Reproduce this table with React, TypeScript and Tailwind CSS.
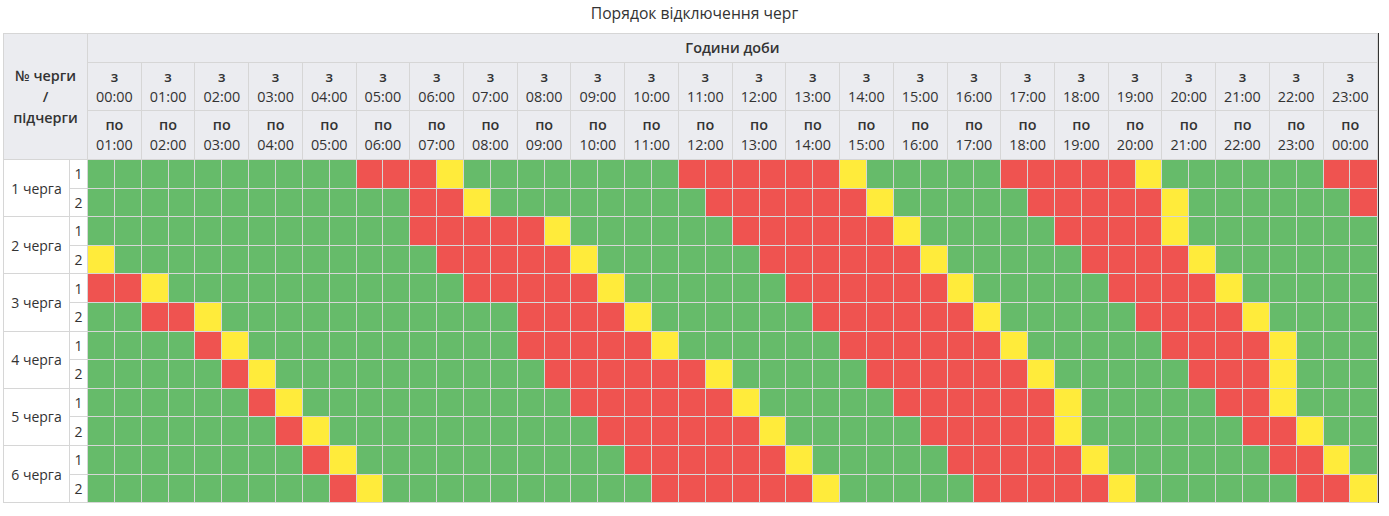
const HOURS = Array.from({ length: 24 }, (_, i) => i);

// one string per sub-queue, run-length: G = світло є, R = відключення, Y = можливе
const SCHEDULE = [
  "G10 R3 Y1 G8 R6 Y1 G5 R5 Y1 G6 R2",
  "G12 R2 Y1 G8 R6 Y1 G5 R5 Y1 G6 R1",
  "G12 R5 Y1 G6 R6 Y1 G5 R4 Y1 G7",
  "Y1 G12 R5 Y1 G6 R6 Y1 G5 R4 Y1 G6",
  "R2 Y1 G11 R5 Y1 G6 R6 Y1 G5 R4 Y1 G5",
  "G2 R2 Y1 G11 R4 Y1 G6 R6 Y1 G5 R4 Y1 G4",
  "G4 R1 Y1 G10 R5 Y1 G6 R6 Y1 G5 R4 Y1 G3",
  "G5 R1 Y1 G10 R6 Y1 G5 R6 Y1 G5 R3 Y1 G3",
  "G6 R1 Y1 G10 R6 Y1 G5 R6 Y1 G5 R2 Y1 G3",
  "G7 R1 Y1 G10 R6 Y1 G5 R5 Y1 G6 R2 Y1 G2",
  "G8 R1 Y1 G10 R6 Y1 G5 R5 Y1 G6 R2 Y1 G1",
  "G9 R1 Y1 G10 R6 Y1 G5 R5 Y1 G6 R2 Y1",
];

const CELL: Record<string, string> = {
  G: "bg-[#66bb6a]",
  R: "bg-[#ef5350]",
  Y: "bg-[#ffeb3b]",
};

function expand(row: string): string[] {
  return row.split(" ").flatMap((t) => Array(Number(t.slice(1))).fill(t[0]));
}

const pad = (n: number) => `${String(n % 24).padStart(2, "0")}:00`;

export default function App() {
  const rows = SCHEDULE.map(expand);

  return (
    <div
      className="bg-white text-[#333] text-[14px] w-[1389px] min-h-[516px]"
      style={{ fontFamily: "'Open Sans', sans-serif" }}
    >
      <div className="h-[33px] pt-[2px] text-center text-[15.7px] leading-[22px]">Порядок відключення черг</div>

      <div className="pl-[3px]">
        <div className="w-[1376px] border-r border-[#333]">
          <table className="table-fixed border-collapse w-[1375px]">
            <colgroup>
              <col className="w-[66px]" />
              <col className="w-[18px]" />
              {Array.from({ length: 48 }, (_, i) => (
                <col key={i} />
              ))}
            </colgroup>
            <thead className="bg-[#ebecf0] text-[14.4px]">
              <tr className="h-[29px]">
                <th
                  rowSpan={3}
                  colSpan={2}
                  className="border border-[#d6d6d6] font-semibold leading-[21px] px-1"
                >
                  № черги
                  <br />/<br />
                  підчерги
                </th>
                <th colSpan={48} className="border border-[#d6d6d6] font-semibold">
                  Години доби
                </th>
              </tr>
              <tr className="h-[48px]">
                {HOURS.map((h) => (
                  <th key={h} colSpan={2} className="border border-[#d6d6d6] font-normal leading-[20px] p-0">
                    <div className="font-semibold">з</div>
                    <div>{pad(h)}</div>
                  </th>
                ))}
              </tr>
              <tr className="h-[49px]">
                {HOURS.map((h) => (
                  <th key={h} colSpan={2} className="border border-[#d6d6d6] font-normal leading-[20px] p-0">
                    <div className="font-semibold">по</div>
                    <div>{pad(h + 1)}</div>
                  </th>
                ))}
              </tr>
            </thead>
            <tbody>
              {rows.map((cells, r) => (
                <tr key={r} className="h-[28.6px]">
                  {r % 2 === 0 && (
                    <td rowSpan={2} className="border border-[#d6d6d6] text-center whitespace-nowrap">
                      {r / 2 + 1} черга
                    </td>
                  )}
                  <td className="border border-[#d6d6d6] text-center p-0">{(r % 2) + 1}</td>
                  {cells.map((c, i) => (
                    <td key={i} className={`border border-[#d6d6d6] p-0 ${CELL[c]}`} />
                  ))}
                </tr>
              ))}
            </tbody>
          </table>
        </div>
      </div>
    </div>
  );
}
